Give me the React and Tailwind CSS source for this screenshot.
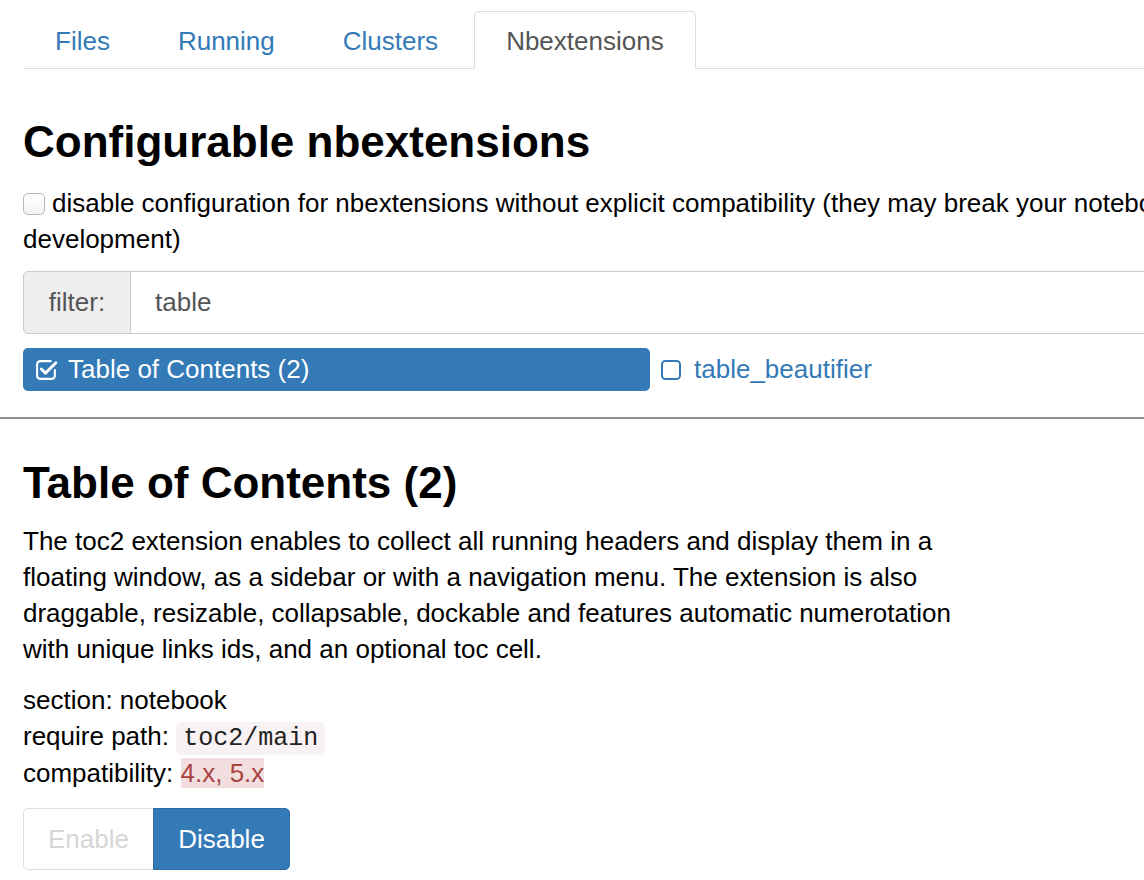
// App.jsx — nbextensions configurator page
const tabs = [
  { label: "Files" },
  { label: "Running" },
  { label: "Clusters" },
  { label: "Nbextensions", active: true },
];

function CheckSquareIcon() {
  return (
    <svg width="23" height="23" viewBox="0 0 22 22" fill="none">
      <path
        d="M15 3H5a3 3 0 0 0-3 3v11a3 3 0 0 0 3 3h11a3 3 0 0 0 3-3v-5.5"
        stroke="white"
        strokeWidth="2"
        strokeLinecap="round"
      />
      <path
        d="M6 10.5l4 4 10-10"
        stroke="white"
        strokeWidth="2.8"
        strokeLinecap="round"
        strokeLinejoin="round"
      />
    </svg>
  );
}

function SquareIcon() {
  return (
    <svg width="22" height="22" viewBox="0 0 22 22" fill="none">
      <rect x="2" y="2" width="18" height="18" rx="3.5" stroke="#337ab7" strokeWidth="2" />
    </svg>
  );
}

export default function App() {
  return (
    <div className="w-[1144px] h-[880px] overflow-hidden bg-white text-black font-['Liberation_Sans',Arial,sans-serif]">
      <div className="w-[1500px] pl-[23px] pt-[11px]">
        {/* tabs */}
        <ul className="flex border-b border-[#ddd] text-[26px]">
          {tabs.map((t) => (
            <li
              key={t.label}
              className={
                t.active
                  ? "-mb-px mr-[4px] flex h-[58px] items-center rounded-t-[5px] border border-[#ddd] border-b-white bg-white px-[31px] pt-[2px] text-[#555]"
                  : "-mb-px mr-[4px] flex h-[58px] items-center border border-transparent px-[31px] pt-[2px] text-[#337ab7]"
              }
            >
              {t.label}
            </li>
          ))}
        </ul>

        <h2 className="mt-[49px] text-[44px] leading-[48px] font-bold">Configurable nbextensions</h2>

        <p className="mt-[19px] text-[26px] leading-[36px]">
          <span className="whitespace-nowrap">
            <span className="relative top-[3px] mr-[7px] inline-block h-[22px] w-[22px] rounded-[5px] border border-[#b5b5b5] bg-gradient-to-b from-white to-[#f4f4f4]"></span>
            disable configuration for nbextensions without explicit compatibility (they may break your notebook environment, but are useful to show for extension
          </span>
          <br />
          development)
        </p>

        {/* filter */}
        <div className="mt-[14px] flex h-[63px] w-[1300px] text-[26px] text-[#555]">
          <span className="flex w-[108px] items-center justify-center rounded-l-[5px] border border-[#ccc] bg-[#eee]">filter:</span>
          <span className="flex flex-1 items-center border border-l-0 border-[#ccc] pl-[24px]">table</span>
        </div>

        <div className="mt-[14px] flex items-center text-[26px]">
          <div className="flex h-[43px] w-[627px] items-center gap-[10px] rounded-[5px] bg-[#337ab7] pl-[12px] text-white">
            <CheckSquareIcon />
            <span>Table of Contents (2)</span>
          </div>
          <div className="ml-[10px] flex items-center gap-[12px] text-[#337ab7]">
            <SquareIcon />
            <span>table_beautifier</span>
          </div>
        </div>

        <div className="mt-[26px] -ml-[23px] h-[2px] bg-[#8e8e8e]"></div>

        <h3 className="mt-[40px] text-[44px] leading-[48px] font-bold">Table of Contents (2)</h3>

        <p className="mt-[16px] text-[26px] leading-[36px]">
          The toc2 extension enables to collect all running headers and display them in a
          <br />
          floating window, as a sidebar or with a navigation menu. The extension is also
          <br />
          draggable, resizable, collapsable, dockable and features automatic numerotation
          <br />
          with unique links ids, and an optional toc cell.
        </p>

        <div className="mt-[15px] text-[26px] leading-[36px]">
          <div>section: notebook</div>
          <div className="h-[37px]">
            require path:{" "}
            <code className="rounded-[5px] bg-[#f9f2f4] px-[7px] py-[2px] font-['Liberation_Mono',monospace] text-[25px] text-[#222]">toc2/main</code>
          </div>
          <div>
            compatibility: <span className="bg-[#f2dede] text-[#a94442]">4.x, 5.x</span>
          </div>
        </div>

        <div className="mt-[17px] flex h-[62px] text-[26px]">
          <div className="flex w-[130px] items-center justify-center rounded-l-[5px] border border-r-0 border-[#ddd] bg-white text-[#d6d6d6]">Enable</div>
          <div className="flex w-[137px] items-center justify-center rounded-r-[5px] border border-[#2e6da4] bg-[#337ab7] text-white">Disable</div>
        </div>
      </div>
    </div>
  );
}
